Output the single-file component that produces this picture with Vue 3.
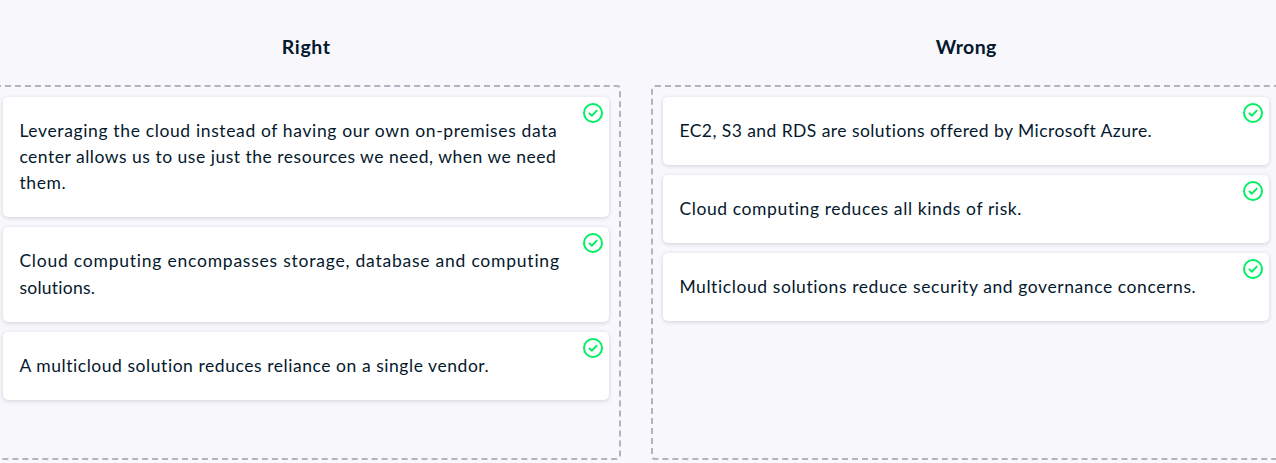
<script setup>
import { ref, onMounted } from 'vue'

const columns = [
  {
    title: 'Right',
    width: 49,
    cards: [
      [
        { text: 'Leveraging the cloud instead of having our own on-premises data', width: 538 },
        { text: 'center allows us to use just the resources we need, when we need', width: 537 },
        { text: 'them.', width: 47 },
      ],
      [
        { text: 'Cloud computing encompasses storage, database and computing', width: 541 },
        { text: 'solutions.', width: 76 },
      ],
      [{ text: 'A multicloud solution reduces reliance on a single vendor.', width: 470.5 }],
    ],
  },
  {
    title: 'Wrong',
    width: 61,
    cards: [
      [{ text: 'EC2, S3 and RDS are solutions offered by Microsoft Azure.', width: 472 }],
      [{ text: 'Cloud computing reduces all kinds of risk.', width: 343 }],
      [{ text: 'Multicloud solutions reduce security and governance concerns.', width: 517.5 }],
    ],
  },
]

const board = ref(null)

onMounted(() => {
  board.value.querySelectorAll('[data-width]').forEach((el) => {
    const natural = el.getBoundingClientRect().width
    const spacing = (Number(el.dataset.width) - natural) / el.textContent.length
    el.style.letterSpacing = `${spacing}px`
  })
})
</script>

<template>
  <main ref="board" class="board">
    <section v-for="column in columns" :key="column.title" class="column">
      <h2 class="title"><span :data-width="column.width">{{ column.title }}</span></h2>
      <div class="zone">
        <article v-for="(lines, i) in column.cards" :key="i" class="card">
          <div v-for="line in lines" :key="line.text" class="line">
            <span :data-width="line.width">{{ line.text }}</span>
          </div>
          <svg class="check" viewBox="0 0 20 20" aria-hidden="true">
            <circle cx="10" cy="10" r="9" />
            <path d="M5.9 10 8.9 12.7 14.2 7.1" />
          </svg>
        </article>
      </div>
    </section>
  </main>
</template>

<style>
html,
body {
  background: #f7f7fc;
  overflow: hidden;
}
</style>

<style scoped>
.board {
  display: flex;
  gap: 30px;
  width: 1290px;
  height: 463px;
  margin-left: -9px;
  color: #05192d;
  font-family: Lato, "Open Sans", sans-serif;
}
.column {
  width: 630px;
  flex: none;
}
.title {
  height: 27px;
  margin: 33px 0 25px;
  padding-left: 0.5px;
  font-size: 19.5px;
  font-weight: 700;
  line-height: 27px;
  text-align: center;
}
.zone {
  box-sizing: border-box;
  height: 375px;
  padding: 10px;
  display: flex;
  flex-direction: column;
  gap: 10px;
  border: 2px dashed #b0b4be;
  border-radius: 4px;
}
.card {
  position: relative;
  padding: 20.9px 16.4px 20.8px;
  background: #fff;
  border-radius: 5px;
  box-shadow: 0 1px 4px rgba(5, 25, 45, 0.16);
}
.line {
  height: 26.25px;
  font-size: 17.5px;
  line-height: 26.25px;
  white-space: nowrap;
}
.check {
  position: absolute;
  top: 6px;
  right: 6px;
  width: 20px;
  height: 20px;
  fill: none;
  stroke: #03ef62;
  stroke-width: 2;
}
</style>
